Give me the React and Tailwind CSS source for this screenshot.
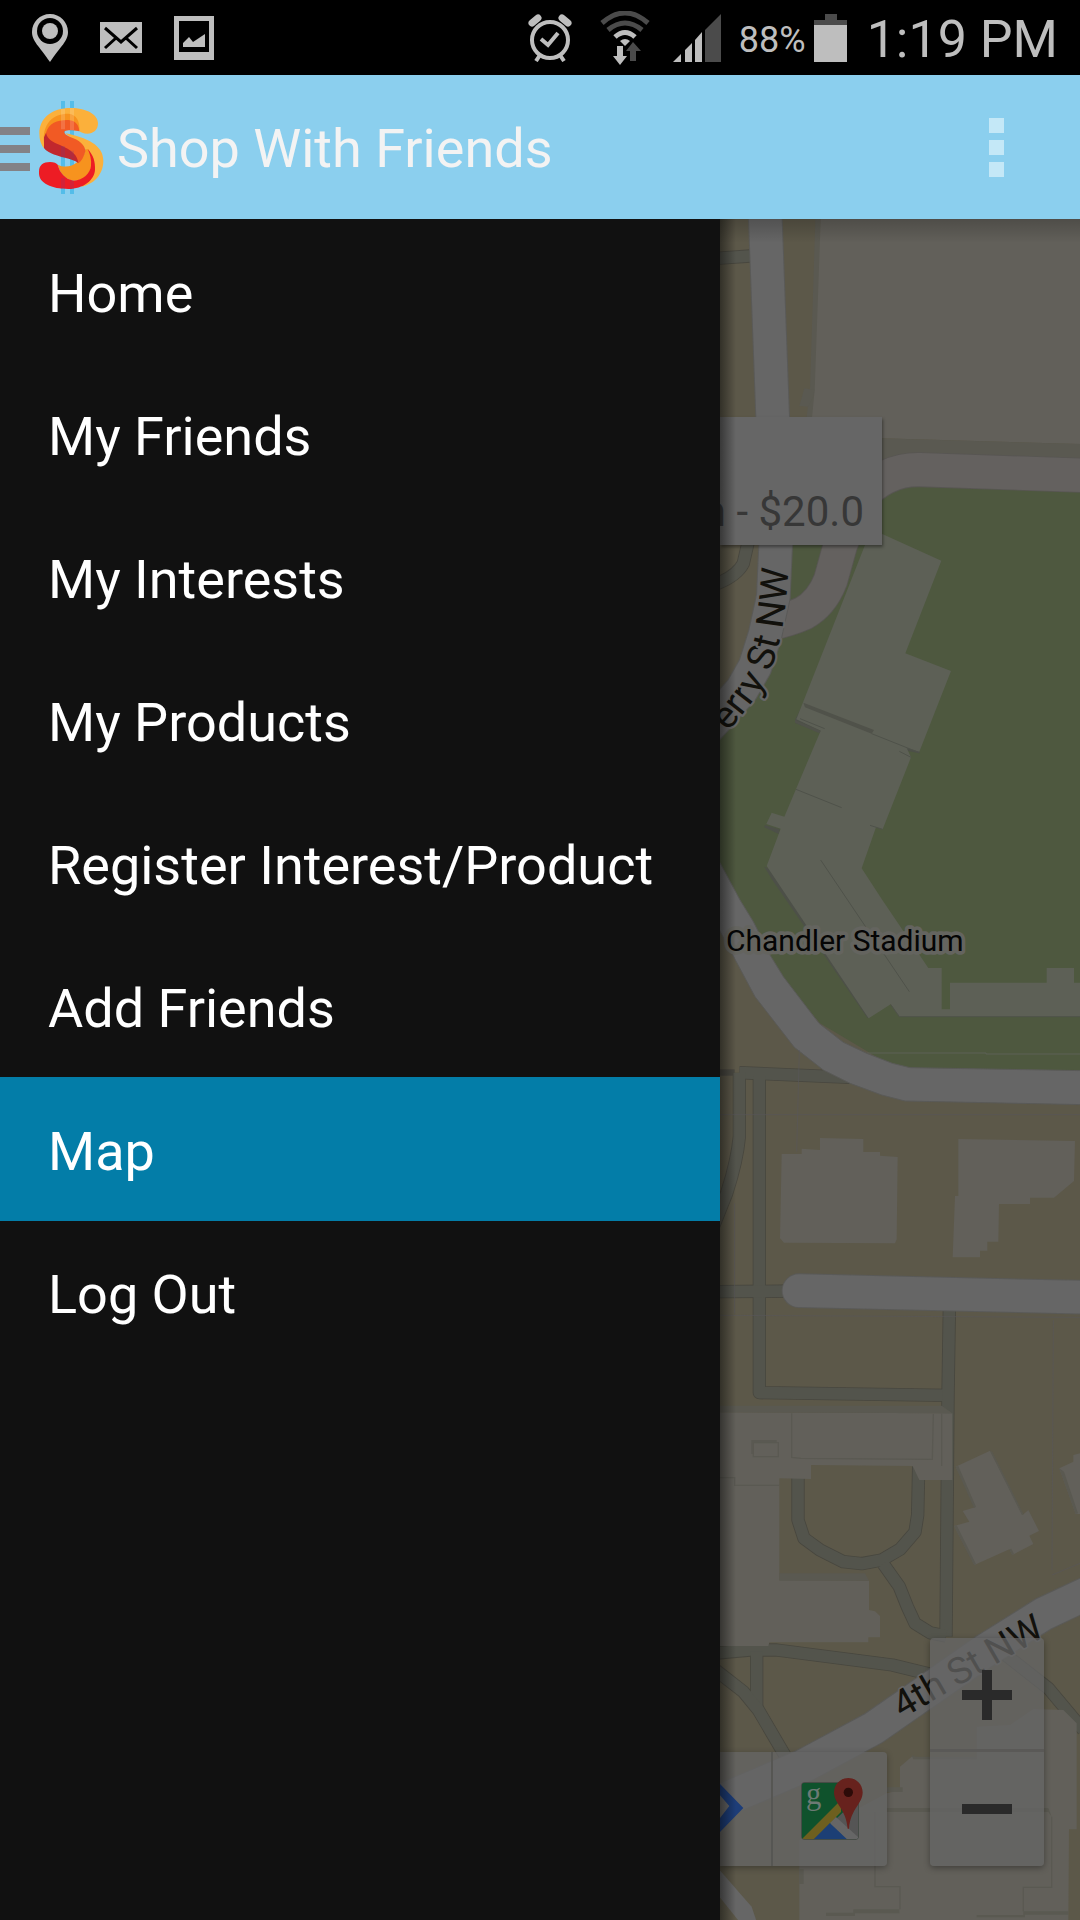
const LABEL_FONT = 'Roboto, "Noto Sans", sans-serif';

const menuItems = [
  "Home",
  "My Friends",
  "My Interests",
  "My Products",
  "Register Interest/Product",
  "Add Friends",
  "Map",
  "Log Out",
];

function StatusBar() {
  return (
    <div className="flex h-[75px] shrink-0 items-center justify-between bg-black pr-[22px] pl-8 text-[#bebebe]">
      <div className="flex items-center gap-8">
        <svg className="h-12 w-9" viewBox="0 0 36 48" fill="#bebebe">
          <path d="M18 0C28 0 36 8 36 18C36 27 29 32 18 48C7 32 0 27 0 18C0 8 8 0 18 0Z" />
          <circle cx="18" cy="17" r="13" fill="#000" />
          <circle cx="18" cy="17" r="8" />
        </svg>
        <svg className="h-8 w-[42px]" viewBox="0 0 42 32">
          <rect width="42" height="31" y="0" fill="#bebebe" />
          <path d="M5 6L21 20L37 6M5 26L16 16M37 26L26 16" fill="none" stroke="#000" strokeWidth="3" />
        </svg>
        <svg className="h-11 w-10" viewBox="0 0 40 44" fill="#bebebe">
          <path fillRule="evenodd" d="M0 0H40V44H0ZM5 5V36H35V5Z" />
          <path d="M9 31V27L15 21L19 26L31 18V31Z" />
        </svg>
      </div>
      <div className="flex items-center">
        <svg className="h-12 w-[44px]" viewBox="0 0 44 48" fill="none" stroke="#bebebe">
          <circle cx="22" cy="26" r="18" strokeWidth="4" />
          <path d="M13 25L20 31L30 19" strokeWidth="4" />
          <path d="M4 9L10 4M40 9L34 4" strokeWidth="7" strokeLinecap="round" />
          <path d="M12 41L8 47M32 41L36 47" strokeWidth="4" />
        </svg>
        <svg className="ml-7 h-[54px] w-[50px]" viewBox="0 0 50 54">
          <g fill="none" strokeWidth="5">
            <path d="M2 12Q25 -8 48 12" stroke="#4b4b4b" />
            <path d="M8 19Q25 5 42 19" stroke="#4b4b4b" />
            <path d="M15 26Q25 17 35 26" stroke="#bebebe" />
          </g>
          <path d="M20 30Q25 26 30 30L25 35Z" fill="#bebebe" />
          <path d="M17 35H23V45H27L20 54L13 45H17Z" fill="#bebebe" />
          <path d="M33 31L41 40H36V50H30V40H26Z" fill="#4b4b4b" />
        </svg>
        <svg className="ml-[23px] h-12 w-12" viewBox="0 0 48 48">
          <path d="M0 48L8 40V48ZM12 48V36L19 29V48ZM22 48V26L29 18V48Z" fill="#bebebe" />
          <path d="M32 48V16L48 0V48Z" fill="#4b4b4b" />
        </svg>
        <span className="ml-[18px] pt-1 text-[36px] leading-none">88%</span>
        <svg className="ml-2 h-12 w-[33px]" viewBox="0 0 33 48">
          <path d="M11 0H23V6H33V12H0V6H11Z" fill="#4b4b4b" />
          <rect y="11" width="33" height="37" fill="#bebebe" />
        </svg>
        <span className="ml-5 pt-1 text-[52px] leading-none">1:19 PM</span>
      </div>
    </div>
  );
}

function Logo() {
  return (
    <svg className="h-[93px] w-[66px]" viewBox="114 33 198 279">
      <path d="M183 33h12v279h-12zM210 33h12v279h-12z" fill="#54bde9" />
      <path
        d="M118 130C118 85 155 54 212 54C262 54 294 75 294 100C294 120 280 131 262 131C250 131 242 127 238 123L225 100L150 120L133 176Q118 160 118 130Z"
        fill="#fbb03b"
      />
      <path d="M196 130C260 143 310 165 310 212C310 255 280 282 245 290L262 182Z" fill="#fbb03b" />
      <path d="M132 160C126 100 160 71 205 71C230 73 241 95 238 124L180 110Z" fill="#f7931e" />
      <path
        d="M173 224C190 233 215 232 232 216C247 205 255 192 255 178L265 178C275 195 276 215 273 230C267 257 245 273 220 272C195 267 180 250 173 224Z"
        fill="#f7931e"
      />
      <path
        d="M138 128C146 98 175 89 205 90C230 92 237 108 238 124C220 121 203 119 194 124C190 130 198 136 220 145C245 155 257 172 256 184C252 200 245 213 235 220C225 195 200 178 170 167C145 157 137 145 138 128Z"
        fill="#f15a24"
      />
      <path
        d="M138 128C142 150 160 156 180 165C215 180 232 195 235 219C225 211 210 207 195 203C160 195 140 186 132 174V142Z"
        fill="#c1272d"
      />
      <path
        d="M117 245C117 225 130 216 150 216C162 216 170 220 173 224C180 250 195 266 220 272C250 271 270 250 273 228C275 208 270 192 263 177C280 195 286 215 285 240C283 270 250 297 205 297C155 297 117 280 117 250Z"
        fill="#ed1c24"
      />
      <path d="M183 56h12v62h-12zM210 54h12v66h-12z" fill="#fff" fillOpacity="0.15" />
      <path d="M183 168h12v34h-12zM210 182h12v24h-12zM183 264h12v32h-12zM210 272h12v24h-12z" fill="#7a3b7c" fillOpacity="0.22" />
    </svg>
  );
}

function ActionBar() {
  return (
    <header className="flex h-36 shrink-0 items-center bg-[#8bcfee]">
      <button aria-label="Toggle navigation" className="flex items-center gap-2">
        <span className="flex w-[30px] flex-col gap-[10px] pt-1">
          <span className="h-2 bg-[#838286]" />
          <span className="h-2 bg-[#838286]" />
          <span className="h-2 bg-[#838286]" />
        </span>
        <Logo />
      </button>
      <h1 className="ml-[13px] flex-1 pt-1 text-[54px] leading-none text-[#f3f3f3]">Shop With Friends</h1>
      <button aria-label="More options" className="mr-[76px] flex flex-col gap-[7px]">
        <span className="size-[15px] bg-[#c4e8f7]" />
        <span className="size-[15px] bg-[#c4e8f7]" />
        <span className="size-[15px] bg-[#c4e8f7]" />
      </button>
    </header>
  );
}

function Drawer() {
  return (
    <nav className="w-2/3 shrink-0 bg-[#111111]">
      <ul>
        {menuItems.map((item) => (
          <li key={item} className="-mb-px">
            <a
              href="#"
              aria-current={item === "Map" ? "page" : undefined}
              className={
                item === "Map"
                  ? "flex h-36 items-center bg-[#037da8] px-12 pt-[6px] text-[54px] leading-none text-white"
                  : "flex h-36 items-center px-12 pt-[6px] text-[54px] leading-none text-white"
              }
            >
              {item}
            </a>
          </li>
        ))}
      </ul>
    </nav>
  );
}

const walks = [
  "M118 2588L450 2602",
  "M118 2588V2780Q112 2850 80 2950L40 3050",
  "M178 2600V3548L745 3556",
  "M60 3245L290 3243",
  "M748 3300L744 3560L738 4280",
  "M294 3780V3930L312 3985L360 4020L430 4055L485 4061L545 4050L600 4018L645 3966L653 3915L656 3770",
  "M550 4062L598 4130L622 4190L645 4240L690 4268L738 4278",
  "M40 4330L150 4320H230L577 4365L700 4395",
  "M170 4325V4490",
  "M40 4375L130 4445L175 4500L260 4645",
  "M860 4290L1045 4435L1150 4560",
  "M40 1125Q110 1100 130 1060L146 990",
  "M40 146L150 138",
];

function CampusMap() {
  return (
    <svg
      className="absolute inset-0 h-full w-full"
      viewBox="60 27 1080 5103"
      preserveAspectRatio="xMinYMin slice"
      fontFamily={LABEL_FONT}
    >
      <rect x="0" y="0" width="2400" height="6000" fill="#5c5849" />

      {/* block north of the stadium */}
      <path d="M346 27H362V600L340 640L320 620L330 535Z" fill="#5a5951" />
      <path d="M362 27H1140V702L547 685H330L344 540Z" fill="#62605a" />
      <path d="M313 535L343 540L340 560L325 590L298 588Z" fill="#5a5951" />
      <path d="M540 685L1140 702V760L540 760Z" fill="#5a5951" />

      {/* stadium grounds */}
      <path d="M1140 835L660 820H222V1160L195 1300L60 1500V2000L160 2200L360 2440L630 2600L1140 2620Z" fill="#4e583f" />
      <path d="M500 2529H858V2532H1140" fill="none" stroke="#5d6056" strokeWidth="3" />

      {/* walkways */}
      <path d="M60 2578H104V2597H60Z" fill="#4a4942" />
      <g fill="none" strokeLinejoin="round">
        {walks.map((d) => (
          <path key={d} d={d} stroke="#48473f" strokeWidth="40" />
        ))}
        {walks.map((d) => (
          <path key={d} d={d} stroke="#53544c" strokeWidth="35" />
        ))}
      </g>

      {/* service road */}
      <g fill="none">
        <path d="M1150 796L660 779Q560 776 480 860L421 1005L392 1110Q365 1180 310 1210Q270 1228 200 1244" stroke="#585653" strokeWidth="105" />
        <path d="M1150 796L660 779Q560 776 480 860L421 1005L392 1110Q365 1180 310 1210Q270 1228 200 1244" stroke="#64615f" strokeWidth="100" />
      </g>

      {/* streets */}
      <g fill="none" strokeLinejoin="round">
        <path d="M195 0L218 620L227 1005L220 1160L195 1275L165 1370L125 1440L0 1580" stroke="#5a5a58" strokeWidth="104" />
        <path d="M195 0L218 620L227 1005L220 1160L195 1275L165 1370L125 1440L0 1580" stroke="#666666" strokeWidth="98" />
        <path d="M297 3242L1200 3263" stroke="#5a5a58" strokeWidth="104" strokeLinecap="round" />
        <path d="M297 3242L1200 3263" stroke="#666666" strokeWidth="98" strokeLinecap="round" />
        <path d="M1200 4134L1140 4160L1030 4212L855 4322L520 4555L310 4668L0 4800" stroke="#5a5a58" strokeWidth="104" />
        <path d="M1200 4134L1140 4160L1030 4212L855 4322L520 4555L310 4668L0 4800" stroke="#666666" strokeWidth="98" />
      </g>
      <path
        d="M50 1940L120 2070L160 2135L210 2235L250 2300L357 2440L430 2497L500 2530L577 2560L630 2573L1150 2582V2684L615 2673L545 2655L450 2620L370 2580L283 2512L165 2360L50 2145Z"
        fill="#666666"
        stroke="#5a5a58"
        strokeWidth="3"
      />
      <path d="M50 4970L155 5090L175 5150H130L50 5050Z" fill="#666666" />

      {/* stadium stands */}
      <path
        d="M285 1530L310 1480L520 1562L515 1580L658 1620V1630L620 1622L362 1568L285 1538ZM195 1845L240 1858L236 1872L193 1852ZM193 1970L217 2010L503 2425L512 2415L240 1990Z"
        fill="#4d5048"
      />
      <path
        d="M495 1005L547 972L724 1052L616 1330L753 1383L658 1625L620 1614L633 1642L548 1858L528 1852L485 1975L547 2070L685 2274H725V2398H750V2318H1040V2274H1122V2318H1140V2420H598L572 2383L506 2425L200 1968L242 1856L199 1842L215 1808L253 1820L362 1562L289 1528Z"
        fill="#5d6056"
      />
      <path d="M310 1478L522 1560L515 1571L315 1492Z" fill="#50524a" />
      <path d="M285 1530L362 1562L358 1570L285 1538Z" fill="#50524a" />
      <path
        d="M515 1571L658 1628M598 1624L633 1642M300 1526L374 1556M288 1738L425 1793M362 1950L628 2345M510 1846L548 1858M572 2383L598 2420H1140"
        fill="none"
        stroke="#4f524a"
        strokeWidth="3"
      />

      {/* campus buildings */}
      <g fill="#62605a">
        <path d="M245 2832H305V2816L360 2820V2784L490 2787V2826H540V2837L593 2841L590 3088L585 3100L252 3098L240 3085Z" />
        <path d="M775 2787L1125 2793L1122 2913L1062 2963H990V2982H897L895 3095H862V3122H840V3142H758L765 2958H775Z" />
        <path d="M60 3607L757 3610V3810H658L638 3768L333 3765V3807L238 3805V4110L507 4112V4200L525 4204L540 4218V4282H505V4297H208L205 4308H60Z" />
        <path d="M767 3770L870 3722L968 3915L985 3900L1017 3963L988 3977L1000 4002L937 4035L928 4018L823 4065L762 3948L808 3935L788 3903L825 3892Z" />
        <path d="M1078 3775L1120 3755V3735L1140 3730V3912H1127Z" />
        <path d="M600 4670L635 4640L830 4648V4550L930 4545L1000 4497L1090 4500L1130 4540V4858H1107L1105 5140H298V4890L560 4750L600 4740Z" />
      </g>
      <g fill="#5a5951">
        <path d="M60 3587H725L757 3610L60 3607Z" />
        <path d="M238 4090H495L507 4112H238Z" />
        <path d="M635 4635L640 4648H830V4640H645Z" />
        <path d="M767 3770L775 3768L828 3890L822 3894ZM762 3948L770 3946L828 4062L822 4065ZM870 3722L877 3726L970 3912L966 3916ZM928 4018L934 4016L942 4032L937 4035ZM1078 3775L1092 3785L1134 3910L1127 3912Z" />
        <path d="M560 4732H608V4746H560ZM1045 4794L1055 4820L1045 4806H560V4794ZM298 5022H311V4978H298Z" />
        <path d="M378 5108H460V5098H598V5110H465V5118H378ZM830 5115H970V5104H1105V5114H975V5122H830Z" />
      </g>
      <path
        d="M275 3610V3742L303 3745L697 3748L700 3612M160 3698H235V3740H160ZM60 3803H104V3826H238M725 3612V3768M525 4806V5030H600V5098M1055 4820V5032H970V5104"
        fill="none"
        stroke="#5a5952"
        strokeWidth="4"
      />
      <path d="M154 3690H230V3698H160V3732H154Z" fill="#5a5952" />
      <path d="M60 2714H1140M298 2520L290 2825M104 2980V3310M60 3316L1140 3322M1060 3330L1056 4080M1056 4095L1140 4060" fill="none" stroke="#58575a" strokeOpacity="0.6" strokeWidth="3" />

      {/* labels */}
      <g paintOrder="stroke" strokeLinejoin="round">
        <path id="cherry-street" d="M-130 1780L50 1608L82 1567L113 1531L150 1484Q194 1430 214 1375Q238 1315 252 1220Q263 1140 265 1076" fill="none" />
        <text fontSize="114" fill="#12110c" stroke="#666666" strokeWidth="14" textAnchor="end">
          <textPath href="#cherry-street" startOffset="100%">
            erry St NW
          </textPath>
        </text>
        <text x="78" y="2222" fontSize="90" fill="#050505" stroke="#64645f" strokeWidth="22">
          Chandler Stadium
        </text>
        <text transform="translate(606 4526) rotate(-30)" fontSize="112" fill="#12110c" stroke="#666666" strokeWidth="10">
          4th St NW
        </text>
      </g>
    </svg>
  );
}

function MapsIcon() {
  return (
    <svg className="h-[62px] w-[62px]" viewBox="0 0 186 186">
      <defs>
        <clipPath id="tile">
          <rect x="2" y="14" width="170" height="170" rx="10" />
        </clipPath>
      </defs>
      <rect x="0" y="12" width="174" height="174" rx="12" fill="#4c4c4a" />
      <g clipPath="url(#tile)">
        <rect x="2" y="14" width="170" height="170" fill="#0f522c" />
        <path d="M172 60V184H40Z" fill="#555555" />
        <path d="M86 134L140 184H36Z" fill="#1c3f75" />
        <path d="M86 134L104 116L172 178V184H138Z" fill="#666666" />
        <path d="M0 186L120 66V102L38 184Z" fill="#6e5f1f" />
      </g>
      <text x="15" y="78" fontSize="92" fontFamily='"Liberation Serif", serif' fill="#6c7a74">
        g
      </text>
      <path d="M142 0C166 0 185 19 185 43C185 78 149 92 144 152H140C135 92 99 78 99 43C99 19 118 0 142 0Z" fill="#67221d" />
      <circle cx="142" cy="43" r="14" fill="#2c0b08" />
    </svg>
  );
}

function MapPane() {
  return (
    <main className="relative flex-1 overflow-hidden">
      <CampusMap />

      <div className="absolute top-[198px] left-0 flex h-32 w-[162px] items-end justify-end bg-[#666666] pr-[18px] pb-3 text-[42px] leading-none whitespace-nowrap text-[#373737] shadow-[1px_2px_3px_rgba(0,0,0,0.4)]">
        <p>n - $20.0</p>
      </div>

      <div className="absolute bottom-[54px] left-0 flex h-[114px] rounded-r bg-[#666666]/75 shadow-[0_2px_6px_rgba(0,0,0,0.3)]">
        <button aria-label="Directions" className="w-[53px] border-r-2 border-[#565653]">
          <svg className="h-[50px] w-6" viewBox="0 0 72 150">
            <path d="M0 0L70 72L0 144V102L28 66L0 34Z" fill="#1d3d78" />
          </svg>
        </button>
        <button aria-label="Open in Google Maps" className="flex w-[114px] items-center justify-center pl-1">
          <MapsIcon />
        </button>
      </div>

      <div className="absolute right-9 bottom-[54px] flex w-[114px] flex-col rounded bg-[#666666]/75 shadow-[0_2px_6px_rgba(0,0,0,0.35)]">
        <button aria-label="Zoom in" className="flex h-[114px] items-center justify-center border-b-3 border-[#5a5957] pt-[2px]">
          <svg className="size-[50px]" viewBox="0 0 50 50" fill="#2a2a2a">
            <path d="M20 0H30V20H50V30H30V50H20V30H0V20H20Z" />
          </svg>
        </button>
        <button aria-label="Zoom out" className="flex h-[114px] items-center justify-center">
          <svg className="size-[50px]" viewBox="0 0 50 50" fill="#2a2a2a">
            <path d="M0 20H50V30H0Z" />
          </svg>
        </button>
      </div>

      <div className="pointer-events-none absolute inset-y-0 left-0 w-4 bg-linear-to-r from-black/45 to-transparent" />
      <div className="pointer-events-none absolute inset-x-0 top-0 h-6 bg-linear-to-b from-black/20 to-transparent" />
    </main>
  );
}

export default function App() {
  return (
    <div className="flex min-h-screen flex-col bg-[#111111] font-[Roboto,'Noto_Sans',sans-serif]">
      <StatusBar />
      <ActionBar />
      <div className="flex flex-1">
        <Drawer />
        <MapPane />
      </div>
    </div>
  );
}
